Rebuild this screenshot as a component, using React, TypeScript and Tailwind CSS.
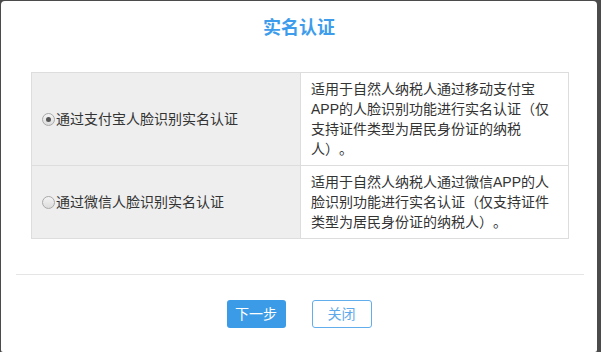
const options = [
  {
    label: '通过支付宝人脸识别实名认证',
    desc: '适用于自然人纳税人通过移动支付宝APP的人脸识别功能进行实名认证（仅支持证件类型为居民身份证的纳税人）。',
    checked: true,
  },
  {
    label: '通过微信人脸识别实名认证',
    desc: '适用于自然人纳税人通过微信APP的人脸识别功能进行实名认证（仅支持证件类型为居民身份证的纳税人）。',
    checked: false,
  },
];

function Radio({ checked }: { checked: boolean }) {
  return (
    <span className="inline-flex w-[13px] h-[13px] shrink-0 items-center justify-center rounded-full border border-[#a9a9a9] bg-gradient-to-b from-[#f4f4f4] to-[#dcdcdc] mr-[1px]">
      {checked && <span className="w-[5px] h-[5px] rounded-full bg-[#555]" />}
    </span>
  );
}

export default function App() {
  return (
    <div
      className="w-[601px] h-[352px] bg-[#4b4b4b] pt-[1px] pl-[1px] pr-[4px] overflow-hidden [text-spacing-trim:space-all]"
      style={{ fontFamily: '"Liberation Sans", "Noto Sans CJK SC", sans-serif' }}
    >
      <div className="h-full bg-white rounded-t-[4px] rounded-b-[2px] pt-[15px]">
        {/* title */}
        <h1 className="text-center text-[18px] leading-[24px] font-bold text-[#3d9ceb]">实名认证</h1>

        {/* options table */}
        <table className="mt-[32px] ml-[30px] w-[538px] border-collapse text-[14px] text-[#333]">
          <tbody>
            {options.map((opt) => (
              <tr key={opt.label}>
                <td className="w-[269px] bg-[#eeeeee] border border-[#dddddd] pl-[10px] pr-[8px] align-middle">
                  <label className="flex items-center">
                    <Radio checked={opt.checked} />
                    <span className="leading-[20px]">{opt.label}</span>
                  </label>
                </td>
                <td className="border border-[#dddddd] pl-[10px] pr-[12px] py-[6px] leading-[20px] align-middle">
                  {opt.desc}
                </td>
              </tr>
            ))}
          </tbody>
        </table>

        <div className="mt-[35px] ml-[15px] w-[568px] h-px bg-[#e5e5e5]" />

        {/* actions */}
        <div className="mt-[25px] flex justify-center gap-[26px] text-[14px]">
          <button className="w-[59px] h-[28px] rounded-[3px] bg-[#3c9be7] text-white">下一步</button>
          <button className="w-[60px] h-[28px] rounded-[3px] border border-[#62adec] bg-white text-[#5ea9ea]">关闭</button>
        </div>
      </div>
    </div>
  );
}
